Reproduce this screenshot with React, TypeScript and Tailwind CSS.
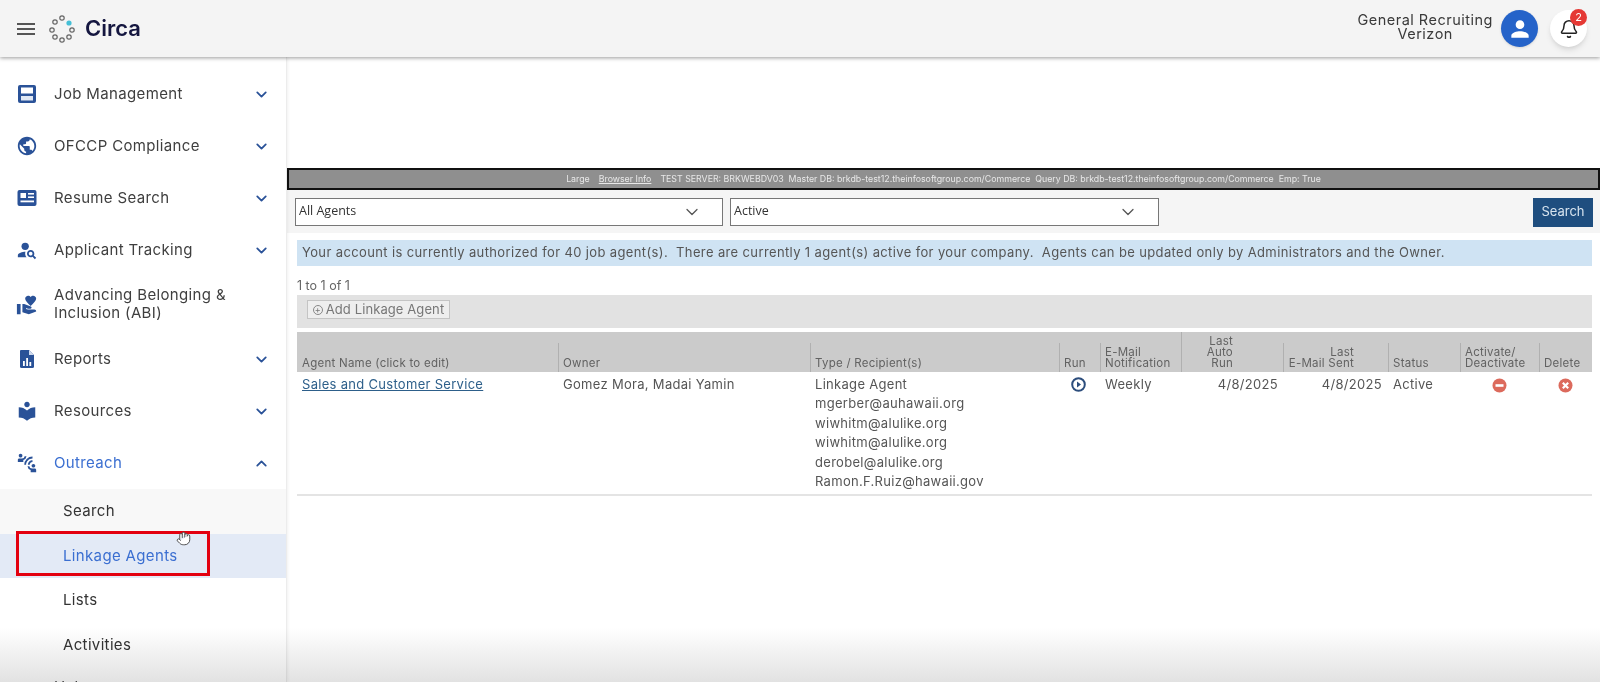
import { ChevronDown, ChevronUp, Hand, Bell } from 'lucide-react';
import { MdPublic, MdPersonSearch, MdVolunteerActivism, MdLocalLibrary, MdConnectWithoutContact, MdPerson, MdHelp, MdMenu } from 'react-icons/md';

const sans = 'font-["Inter","Liberation_Sans",sans-serif]';

function JobIcon() {
  return (
    <svg width="20" height="20" viewBox="0 0 20 20" fill="none">
      <rect x="1" y="1" width="18" height="18" rx="2" fill="#2a5298" />
      <rect x="4" y="3.5" width="12" height="6" fill="#fff" />
      <rect x="4" y="12" width="12" height="4.5" fill="#dfe7f4" />
    </svg>
  );
}

function ResumeIcon() {
  return (
    <svg width="20" height="20" viewBox="0 0 20 20">
      <rect x="0.5" y="2" width="19" height="16" rx="2" fill="#2a5298" />
      <rect x="3.5" y="5" width="5.5" height="5" fill="#fff" />
      <rect x="11" y="5" width="6" height="1.6" fill="#fff" />
      <rect x="11" y="8.4" width="6" height="1.6" fill="#fff" />
      <rect x="3.5" y="12.5" width="13.5" height="1.8" fill="#fff" />
    </svg>
  );
}

function ReportIcon() {
  return (
    <svg width="20" height="20" viewBox="0 0 20 20">
      <path d="M4 1h8l5 5v11.5a1.5 1.5 0 0 1-1.5 1.5h-11A1.5 1.5 0 0 1 3 17.500V2a1 1 0 0 1 1-1z" fill="#2a5298" />
      <path d="M12 1v5h5z" fill="#cfdaee" />
      <rect x="6" y="12" width="1.800" height="5" fill="#fff" />
      <rect x="9.200" y="9" width="1.800" height="8" fill="#fff" />
      <rect x="12.400" y="13" width="1.800" height="4" fill="#fff" />
    </svg>
  );
}

const menu = [
  { label: 'Job Management', icon: <JobIcon /> },
  { label: 'OFCCP Compliance', icon: <MdPublic size={22} color="#2a5298" /> },
  { label: 'Resume Search', icon: <ResumeIcon /> },
  { label: 'Applicant Tracking', icon: <MdPersonSearch size={22} color="#2a5298" /> },
];

function NavItem({ label, icon }: { label: string; icon: React.ReactNode }) {
  return (
    <div className="h-[52px] flex items-center pl-4 pr-[16px]">
      <span className="w-[22px] flex justify-center shrink-0">{icon}</span>
      <span className="ml-4 flex-1 text-[15px] tracking-[0.35px] text-[#3f3f3f]">{label}</span>
      <ChevronDown size={17} strokeWidth={2.5} color="#2a5298" />
    </div>
  );
}

function SubItem({ label, active, shaded }: { label: string; active?: boolean; shaded?: boolean }) {
  return (
    <div className={`h-[44.500px] flex items-center pl-[63px] text-[15px] tracking-[0.35px] ${active ? 'bg-[#e3eaf6] text-[#3b6fd1]' : 'text-[#333]'} ${shaded ? 'bg-[#f8f8f8]' : ''}`}>
      {label}
    </div>
  );
}

function Logo() {
  const dots = [
    [62, 16],
    [72, 28],
    [69, 35],
    [62, 38],
    [55, 35],
    [52, 28],
    [55, 20],
  ];
  return (
    <svg width="28" height="28" viewBox="48 13 28 28" fill="none">
      {dots.map(([x, y]) => (
        <circle key={`${x}-${y}`} cx={x} cy={y} r="2.200" stroke="#666" strokeWidth="1.200" />
      ))}
      <circle cx="69" cy="21" r="2.600" fill="#45bfd6" />
    </svg>
  );
}

function Header() {
  return (
    <header className="relative z-10 h-[57px] shrink-0 bg-[#f4f4f4] shadow-[0_1px_4px_rgba(0,0,0,0.4)] flex items-center pl-[14px] pr-[13px]">
      <MdMenu size={24} color="#555" />
      <span className="ml-[10px] flex"><Logo /></span>
      <span className="ml-[9px] text-[22px] font-semibold text-[#14163f]">Circa</span>
      <div className="ml-auto -mt-[3px] text-center text-[14.500px] leading-[14px] text-[#3a3a3a] tracking-[0.5px]">
        <div>General Recruiting</div>
        <div>Verizon</div>
      </div>
      <div className="ml-2 w-[37px] h-[37px] rounded-full bg-[#2563c9] flex items-center justify-center shadow-sm">
        <MdPerson size={26} color="#fff" />
      </div>
      <div className="relative ml-[12px] w-[37px] h-[37px] rounded-full bg-white flex items-center justify-center shadow-md">
        <Bell size={20} color="#222" strokeWidth={1.800} />
        <span className="absolute top-[-1px] right-0 w-[17px] h-[17px] rounded-full bg-[#e53935] text-white text-[11px] flex items-center justify-center">2</span>
      </div>
    </header>
  );
}

function Sidebar() {
  return (
    <aside className="relative w-[287px] shrink-0 pt-[11px] border-r border-[#ececec] shadow-[1px_0_3px_rgba(0,0,0,0.06)]">
      {menu.map((item) => (
        <NavItem key={item.label} {...item} />
      ))}
      <div className="h-[57px] flex items-center pl-4 pr-[19px]">
        <span className="w-[22px] flex justify-center shrink-0"><MdVolunteerActivism size={22} color="#2a5298" /></span>
        <span className="ml-4 -mt-[1px] flex-1 text-[15px] leading-[18px] tracking-[0.35px] text-[#3f3f3f]">Advancing Belonging &<br />Inclusion (ABI)</span>
      </div>
      <NavItem label="Reports" icon={<ReportIcon />} />
      <NavItem label="Resources" icon={<MdLocalLibrary size={22} color="#2a5298" />} />
      <div className="h-[52px] flex items-center pl-4 pr-[16px]">
        <span className="w-[22px] flex justify-center shrink-0"><MdConnectWithoutContact size={22} color="#2a5298" /></span>
        <span className="ml-4 flex-1 text-[15px] tracking-[0.35px] text-[#3b6fd1]">Outreach</span>
        <ChevronUp size={17} strokeWidth={2.5} color="#2a5298" />
      </div>
      <SubItem label="Search" shaded />
      <SubItem label="Linkage Agents" active />
      <SubItem label="Lists" />
      <SubItem label="Activities" />
      <div className="h-[52px] flex items-center pl-4 pr-[19px]">
        <span className="w-[22px] -mt-[3px] flex justify-center shrink-0"><MdHelp size={22} color="#2a5298" /></span>
        <span className="ml-4 -mt-[11px] flex-1 text-[15px] tracking-[0.35px] text-[#3f3f3f]">Help</span>
      </div>
      {/* red highlight drawn on the recording */}
      <div className="absolute left-[16px] top-[474px] w-[194px] h-[45px] border-[3px] border-[#e3000f]" />
      <Hand className="absolute left-[176px] top-[474px]" size={15} color="#444" fill="#fff" strokeWidth={1.500} />
    </aside>
  );
}

function Select({ value, className }: { value: string; className: string }) {
  return (
    <div className={`h-[28px] bg-white border border-[#777] flex items-center justify-between pl-[3px] pr-[20px] text-[12.500px] text-[#333] font-["Open_Sans",sans-serif] ${className}`}>
      {value}
      <ChevronDown size={20} color="#555" strokeWidth={1.500} />
    </div>
  );
}

// separators stop short of the top of the header row, so they are a sized background, not a border
const colHead = 'px-[5px] pb-[3px] align-bottom font-normal text-left text-[11.500px] leading-[11px] tracking-[0.25px] text-[#626262] bg-[linear-gradient(#b0b0b0,#b0b0b0)] bg-no-repeat bg-left-bottom bg-[length:1px_29px] first:bg-none';

function StatusIcon({ kind }: { kind: 'minus' | 'x' }) {
  return (
    <svg width="15" height="15" viewBox="0 0 15 15" className="inline-block">
      <circle cx="7.500" cy="7.500" r="7" fill="#dc6a5c" />
      {kind === 'minus' ? (
        <rect x="3.500" y="6.200" width="8" height="2.600" fill="#fff" />
      ) : (
        <path d="M4.800 4.800l5.400 5.400M10.200 4.800l-5.400 5.400" stroke="#fff" strokeWidth="2.200" />
      )}
    </svg>
  );
}

function AgentsTable() {
  return (
    <table className="w-[1295px] table-fixed border-b-2 border-[#e4e4e4] mt-[4px] text-[13px] tracking-[0.3px] text-[#555]">
      <colgroup>
        <col className="w-[261px]" />
        <col className="w-[252px]" />
        <col className="w-[249px]" />
        <col className="w-[41px]" />
        <col className="w-[81px]" />
        <col className="w-[102px]" />
        <col className="w-[105px]" />
        <col className="w-[72px]" />
        <col className="w-[79px]" />
        <col className="w-[53px]" />
      </colgroup>
      <thead>
        <tr className="h-[40px] bg-[#cbcbcb]">
          <th className={colHead}>Agent Name (click to edit)</th>
          <th className={colHead}>Owner</th>
          <th className={colHead}>Type / Recipient(s)</th>
          <th className={colHead}>Run</th>
          <th className={colHead}>E-Mail<br />Notification</th>
          <th className={`${colHead} !text-right !pr-[50px] !bg-[length:1px_40px]`}>Last<br />Auto<br />Run</th>
          <th className={`${colHead} !text-right !pr-[34px]`}>Last<br />E-Mail Sent</th>
          <th className={colHead}>Status</th>
          <th className={colHead}>Activate/<br />Deactivate</th>
          <th className={colHead}>Delete</th>
        </tr>
      </thead>
      <tbody>
        <tr className="align-top leading-[19.400px]">
          <td className="px-[5px] pt-[3px]"><a className="text-[#2d5f8a] underline">Sales and Customer Service</a></td>
          <td className="px-[5px] pt-[3px]">Gomez Mora, Madai Yamin</td>
          <td className="px-[5px] pt-[3px] pb-[3px]">
            <div>Linkage Agent</div>
            <div>mgerber@auhawaii.org</div>
            <div>wiwhitm@alulike.org</div>
            <div>wiwhitm@alulike.org</div>
            <div>derobel@alulike.org</div>
            <div>Ramon.F.Ruiz@hawaii.gov</div>
          </td>
          <td className="pt-[5px] pl-[12px]">
            <svg width="15" height="15" viewBox="0 0 15 15">
              <circle cx="7.500" cy="7.500" r="6.300" fill="#fff" stroke="#2c4d7c" strokeWidth="2" />
              <path d="M6 4.500l4 3-4 3z" fill="#2c4d7c" />
            </svg>
          </td>
          <td className="px-[5px] pt-[3px]">Weekly</td>
          <td className="px-[5px] pt-[3px] text-right">4/8/2025</td>
          <td className="px-[6px] pt-[3px] text-right">4/8/2025</td>
          <td className="px-[5px] pt-[3px]">Active</td>
          <td className="pt-[3px] text-center"><StatusIcon kind="minus" /></td>
          <td className="pt-[3px] text-center"><StatusIcon kind="x" /></td>
        </tr>
      </tbody>
    </table>
  );
}

function Main() {
  return (
    <main className="flex-1 min-w-0 pt-[111px]">
      <div className="h-[22px] bg-[#8f8f8f] border-2 border-[#111] flex items-center justify-center gap-[9px] text-[8.800px] text-[#e8e8e8] whitespace-pre">
        <span>Large</span>
        <span className="underline">Browser Info</span>
        <span>TEST SERVER: BRKWEBDV03  Master DB: brkdb-test12.theinfosoftgroup.com/Commerce  Query DB: brkdb-test12.theinfosoftgroup.com/Commerce  Emp: True</span>
      </div>
      <div className="h-[43px] bg-[#f5f5f5] flex items-center pl-[8px] pr-[7px] gap-[7px]">
        <Select value="All Agents" className="w-[428px]" />
        <Select value="Active" className="w-[429px]" />
        <button className="ml-auto mt-[1px] w-[60px] h-[29px] bg-[#1f4e7f] text-[#d8e4ef] text-[13px]">Search</button>
      </div>
      <div className="pl-[10px] pr-[8px]">
        <div className="mt-[7px] h-[26px] bg-[#cfe3f3] flex items-center pl-[5px] text-[13px] tracking-[0.37px] text-[#555] whitespace-pre">
          Your account is currently authorized for 40 job agent(s).  There are currently 1 agent(s) active for your company.  Agents can be updated only by Administrators and the Owner.
        </div>
        <div className="mt-[11px] h-[18px] text-[12.500px] leading-[18px] text-[#666]">1 to 1 of 1</div>
        <div className="h-[33px] bg-[#e2e2e2] pl-[10px] pt-[5px]">
          <div className="h-[19px] w-[143px] bg-[#eeeeee] border border-[#c4c4c4] flex items-center justify-center gap-[3px] text-[13px] tracking-[0.1px] text-[#777]">
            <span className="w-[10px] h-[10px] rounded-full border border-[#888] text-[9px] leading-[8px] text-center">+</span>
            Add Linkage Agent
          </div>
        </div>
        <AgentsTable />
      </div>
    </main>
  );
}

export default function App() {
  return (
    <div className={`relative h-[682px] w-[1600px] overflow-hidden bg-white flex flex-col ${sans}`}>
      <Header />
      <div className="flex flex-1 min-h-0">
        <Sidebar />
        <Main />
      </div>
      {/* the recording fades out at the bottom */}
      <div className="absolute inset-x-0 bottom-0 h-[54px] bg-gradient-to-b from-white to-[#e2e2e2] mix-blend-multiply pointer-events-none" />
    </div>
  );
}
